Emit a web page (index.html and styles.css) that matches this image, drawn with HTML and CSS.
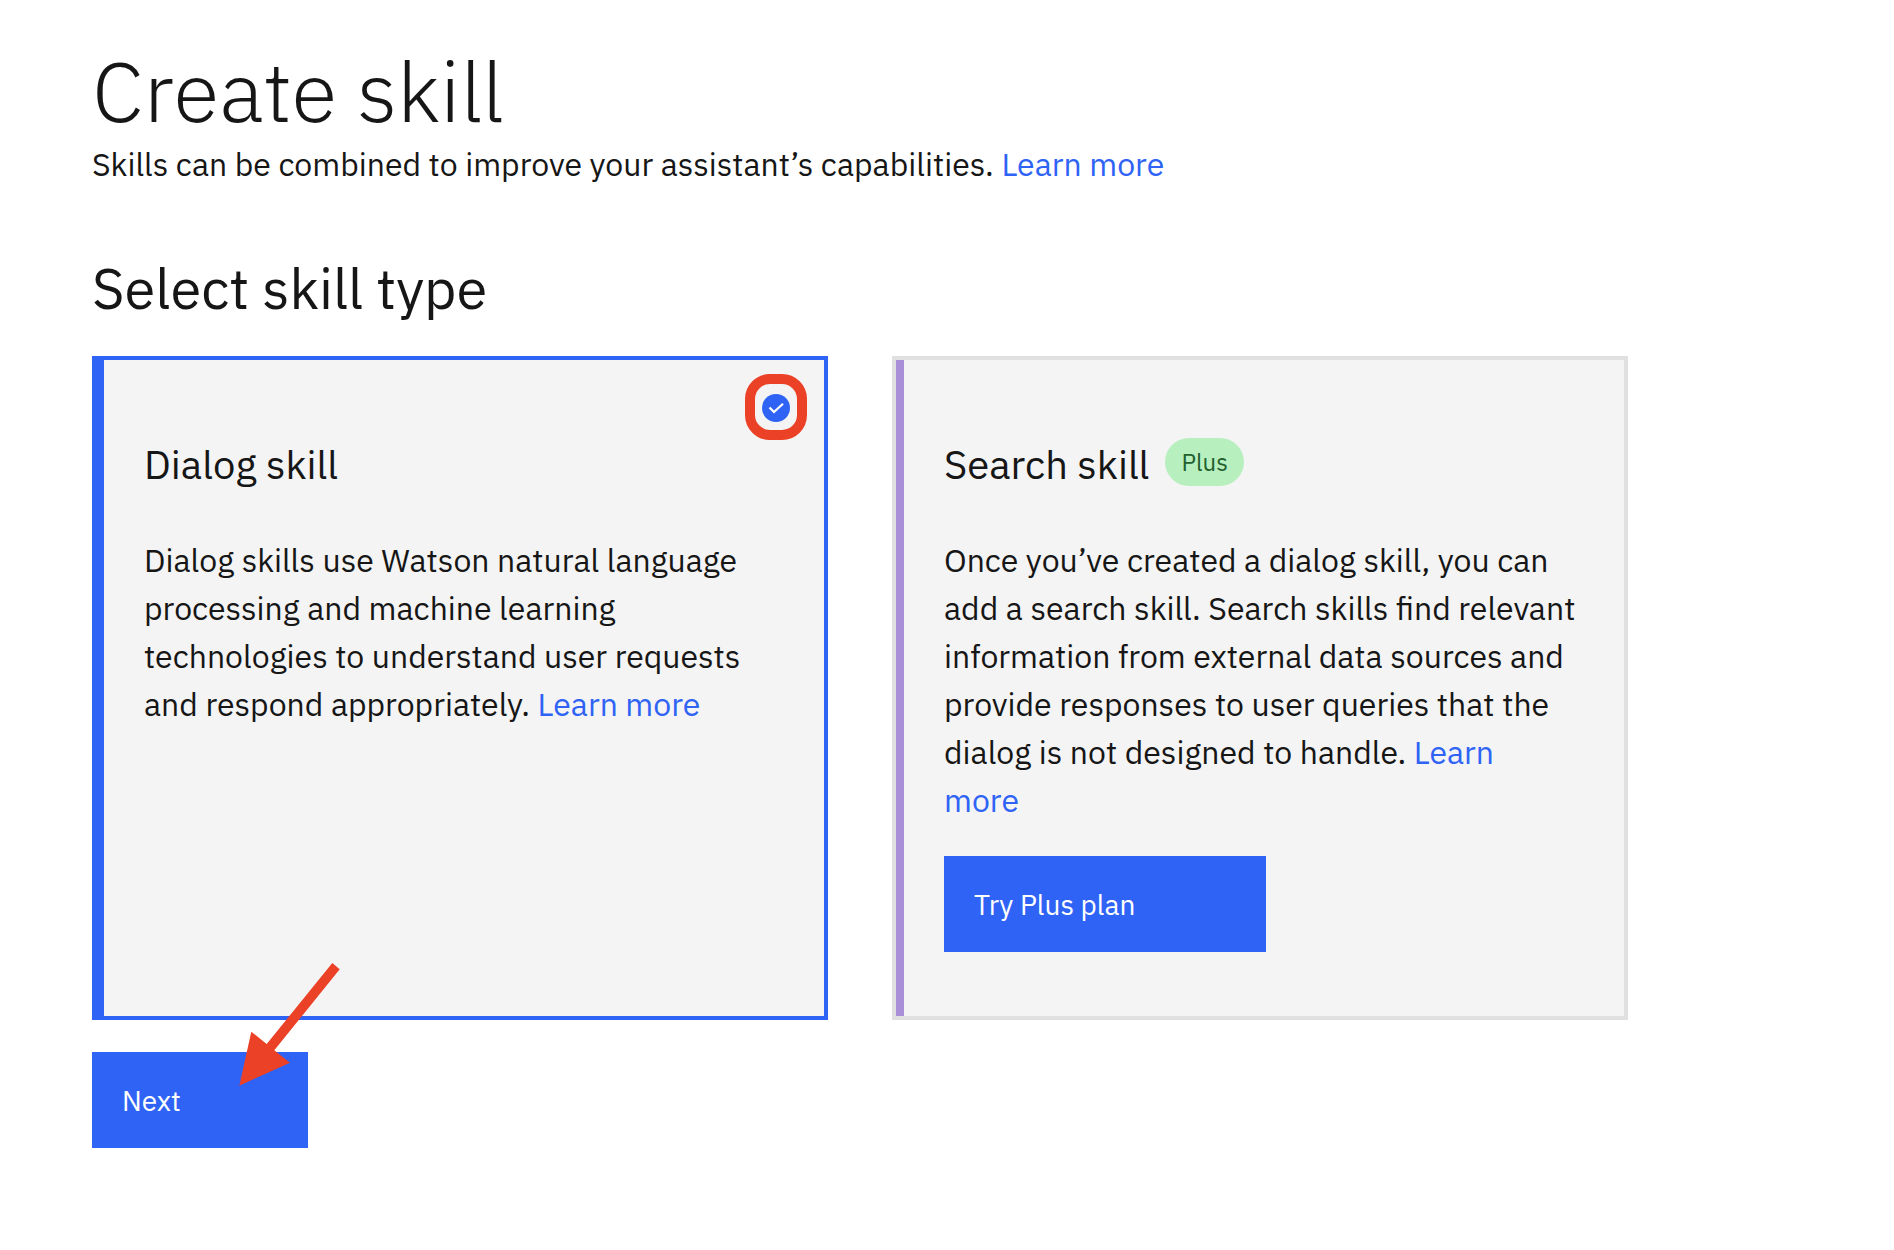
FILE: index.html
```html
<!DOCTYPE html>
<html lang="en">
<head>
<meta charset="utf-8">
<meta name="viewport" content="width=device-width, initial-scale=1">
<title>Create skill</title>
<link rel="stylesheet" href="styles.css">
</head>
<body>
<main class="page">
  <header>
    <h1 class="page-title">Create skill</h1>
    <p class="text">Skills can be combined to improve your assistant’s capabilities. <a class="link" href="#">Learn more</a></p>
  </header>
  <form>
    <h2 class="section-title">Select skill type</h2>
    <div class="cards">
      <section class="card card-selected">
        <span class="check">
          <input class="check-input" type="radio" name="skill" aria-labelledby="dialog-title" checked>
          <svg class="check-mark" viewBox="0 0 28 28" aria-hidden="true"><path d="M7.500 13.500L12 18L21 9.700" fill="none" stroke="#fff" stroke-width="2.200"/></svg>
          <span class="highlight"></span>
        </span>
        <div class="card-head"><h3 class="card-title" id="dialog-title">Dialog skill</h3></div>
        <p class="text">Dialog skills use Watson natural language processing and machine learning technologies to understand user requests and respond appropriately. <a class="link" href="#">Learn more</a></p>
      </section>
      <section class="card card-plus">
        <div class="card-head"><h3 class="card-title">Search skill</h3><span class="tag">Plus</span></div>
        <p class="text">Once you’ve created a dialog skill, you can add a search skill. Search skills find relevant information from external data sources and provide responses to user queries that the dialog is not designed to handle. <a class="link" href="#">Learn more</a></p>
        <button class="button button-plan" type="button">Try Plus plan</button>
      </section>
    </div>
    <div class="actions">
      <button class="button button-next" type="submit">Next</button>
      <svg class="arrow" viewBox="0 0 108 130" aria-hidden="true"><path fill="#eb4126" d="M96.300 3L103.700 9.300L38.300 90.300L54 102.700L3.300 125.700L15.300 71.700L30.700 84Z"/></svg>
    </div>
  </form>
</main>
</body>
</html>
```
FILE: styles.css
```css
* { box-sizing: border-box; }

body {
  margin: 0;
  background: #fff;
  color: #161616;
  font-family: "IBM Plex Sans", Roboto, "Liberation Sans", sans-serif;
}

h1, h2, h3, p { margin: 0; }

.page {
  max-width: 1720px;
  padding: 42px 92px 64px;
}

.page-title {
  font-size: 84px;
  font-weight: 300;
  line-height: 98px;
}

.text {
  font-size: 32px;
  line-height: 48px;
}

.link {
  color: #2f63f5;
  text-decoration: none;
}

.section-title {
  margin: 64px 0 32px;
  font-size: 56px;
  font-weight: 400;
  line-height: 72px;
}

.cards {
  display: grid;
  grid-template-columns: 1fr 1fr;
  gap: 64px;
}

.card {
  position: relative;
  padding: 78px 48px 64px;
  border: 4px solid #e0e0e0;
  background: #f4f4f4;
}

.card-selected {
  padding-left: 40px;
  border-color: #2f63f5;
  border-left-width: 12px;
}

.card-plus { box-shadow: inset 8px 0 #a98fd8; }

.card-head {
  display: flex;
  gap: 16px;
  margin-bottom: 46px;
}

.card-title {
  font-size: 40px;
  font-weight: 400;
  line-height: 52px;
}

.tag {
  height: 48px;
  padding: 0 16px;
  border-radius: 24px;
  background: #b7efbf;
  color: #22602f;
  font-size: 24px;
  line-height: 48px;
}

.check {
  position: absolute;
  top: 34px;
  right: 34px;
  width: 28px;
  height: 28px;
}

.check-input {
  display: block;
  width: 28px;
  height: 28px;
  margin: 0;
  appearance: none;
  border-radius: 50%;
  background: #2f63f5;
}

.check-mark {
  position: absolute;
  inset: 0;
  pointer-events: none;
}

.highlight {
  position: absolute;
  inset: -20px -17px -18px;
  border: 10px solid #eb4126;
  border-radius: 25px;
  pointer-events: none;
}

.button {
  display: block;
  height: 96px;
  padding: 0 30px;
  border: 0;
  background: #2f63f5;
  color: #fff;
  font: inherit;
  font-size: 28px;
  text-align: left;
  cursor: pointer;
}

.button-plan {
  width: 322px;
  margin-top: 32px;
}

.button-next { width: 216px; }

.actions {
  position: relative;
  margin-top: 32px;
}

.arrow {
  position: absolute;
  top: -92px;
  left: 144px;
  width: 108px;
  height: 130px;
  pointer-events: none;
}
```
